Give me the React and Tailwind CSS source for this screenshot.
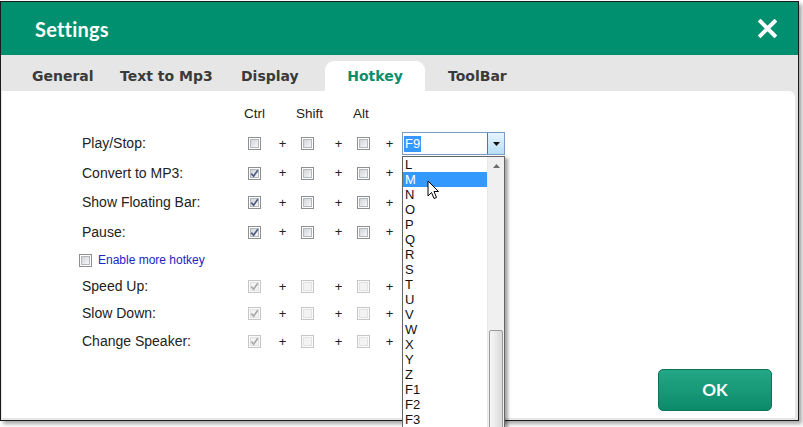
import React from "react";

const Check = ({ checked, disabled }) => (
  <div
    className={
      disabled
        ? "relative w-[13px] h-[13px] shrink-0 border border-[#c6c6c6] bg-[#fafafa] p-[1px]"
        : "relative w-[13px] h-[13px] shrink-0 border border-[#8e8f8f] bg-white p-[1px]"
    }
  >
    <div
      className={
        disabled
          ? "w-full h-full border border-[#e2e2e2] bg-[#f3f3f3]"
          : "w-full h-full border border-[#b4b8bd] bg-gradient-to-br from-[#d2d4d8] to-[#f7f7f7]"
      }
    />
    {checked && (
      <svg className="absolute left-0 top-0" width="11" height="11" viewBox="0 0 11 11">
        <path
          d="M2.3 5.6 L4.6 8.2 L8.8 2.2"
          fill="none"
          stroke={disabled ? "#a9a9a9" : "#4b5c82"}
          strokeWidth="1.7"
        />
      </svg>
    )}
  </div>
);

const Plus = ({ ml, mr }) => (
  <div className={`flex justify-center w-[7px] text-[13px] text-[#222] ${ml} ${mr}`}>+</div>
);

const Row = ({ label, c, h, disabled, children }) => (
  <div className={`flex items-center pl-[80px] ${h}`}>
    <div className="w-[166px] text-[14px] text-[#222]">{label}</div>
    <Check checked={c} disabled={disabled} />
    <Plus ml="ml-[18px]" mr="mr-[15px]" />
    <Check disabled={disabled} />
    <Plus ml="ml-[21px]" mr="mr-[15px]" />
    <Check disabled={disabled} />
    <Plus ml="ml-[16px]" mr="mr-[9px]" />
    {children}
  </div>
);

const items = ["L", "M", "N", "O", "P", "Q", "R", "S", "T", "U", "V", "W", "X", "Y", "Z", "F1", "F2", "F3"];

const Select = () => (
  <div className="relative w-[103px] h-[23px]">
    <div className="flex w-full h-full border border-[#7a9cc4] bg-white">
      <div className="flex-1 flex items-center pl-[1px]">
        <span className="bg-[#3399ff] text-white text-[13px] leading-[16px] px-[1px]">F9</span>
      </div>
      <div className="w-[17px] h-full border-l border-[#3c7fb1] bg-gradient-to-b from-[#e6f4fc] to-[#b7def4] flex items-center justify-center">
        <svg width="7" height="4" viewBox="0 0 7 4">
          <path d="M0 0 H7 L3.5 4 Z" fill="#111" />
        </svg>
      </div>
    </div>
    <div className="absolute left-0 top-[24px] w-[103px] h-[300px] border border-[#646464] bg-white shadow-[3px_2px_3px_rgba(0,0,0,0.35)] flex z-10">
      <div className="flex-1 flex flex-col">
        {items.map((it) => (
          <div
            key={it}
            className={
              it === "M"
                ? "h-[15px] leading-[15px] text-[13px] pl-[2px] bg-[#3399ff] text-white"
                : "h-[15px] leading-[15px] text-[13px] pl-[2px] text-[#111]"
            }
          >
            {it}
          </div>
        ))}
      </div>
      <div className="w-[17px] h-full bg-[#f0f0f0] border-l border-[#e8e8e8] flex flex-col">
        <div className="h-[17px] flex items-center justify-center">
          <svg width="7" height="4" viewBox="0 0 7 4">
            <path d="M0 4 H7 L3.5 0 Z" fill="#6d6d6d" />
          </svg>
        </div>
        <div className="h-[156px]" />
        <div className="flex-1 mx-[1px] rounded-[2px] border border-[#9b9b9b] bg-gradient-to-r from-[#f6f6f6] via-[#e9e9e9] to-[#d9d9d9]" />
      </div>
      <svg className="absolute left-[24px] top-[23px]" width="14" height="21" viewBox="0 0 14 21">
        <path
          d="M1 1 L1 16 L4.5 12.5 L7 18.5 L9.5 17.5 L7 11.5 L11.5 11.5 Z"
          fill="#fff"
          stroke="#000"
          strokeWidth="1"
          strokeLinejoin="round"
        />
      </svg>
    </div>
  </div>
);

export default function App() {
  return (
    <div className="w-[803px] h-[427px] overflow-hidden bg-white relative font-['Liberation_Sans',Arial,sans-serif]">
      <div className="mt-[1px] w-[799px] h-[420px] border border-[#1b1b1b] bg-[#e6e6e6] shadow-[3px_3px_4px_rgba(0,0,0,0.35)] flex flex-col">
        {/* Header */}
        <div className="h-[53px] bg-[#00906f] flex items-center justify-between pl-[34px] pr-[21px]">
          <div className="text-white text-[20px] font-bold font-['Lato',sans-serif] tracking-[0.2px]">Settings</div>
          <svg width="19" height="19" viewBox="0 0 19 19">
            <path d="M2.5 2.5 L16.5 16.5 M16.5 2.5 L2.5 16.5" stroke="#fff" strokeWidth="4" strokeLinecap="square" />
          </svg>
        </div>
        {/* Tabs */}
        <div className="h-[36px] flex items-end pl-[31px] font-['DejaVu_Sans',sans-serif] font-bold text-[14px] text-[#3a3a3a]">
          <div className="w-[88px] h-[30px] flex items-center">General</div>
          <div className="w-[121px] h-[30px] flex items-center">Text to Mp3</div>
          <div className="w-[84px] h-[30px] flex items-center">Display</div>
          <div className="w-[100px] h-[30px] flex items-center justify-center bg-white rounded-t-[9px] text-[#0c8d6c]">Hotkey</div>
          <div className="ml-[23px] h-[30px] flex items-center">ToolBar</div>
        </div>
        {/* Panel */}
        <div className="flex-1 ml-[1px] mr-[3px] mb-[2px] bg-white rounded-tr-[6px] flex flex-col pt-[8.25px]">
          <div className="flex items-center h-[29.5px] pl-[242px] text-[13.5px] text-[#222]">
            <span>Ctrl</span>
            <span className="ml-[31px]">Shift</span>
            <span className="ml-[30px]">Alt</span>
          </div>
          <Row label="Play/Stop:" h="h-[29.5px]">
            <Select />
          </Row>
          <Row label="Convert to MP3:" c h="h-[29.5px]" />
          <Row label="Show Floating Bar:" c h="h-[29.5px]" />
          <Row label="Pause:" c h="h-[29.5px]" />
          <div className="flex items-center h-[27px] pl-[77px]">
            <Check />
            <span className="ml-[6px] text-[12px] text-[#2323c4]">Enable more hotkey</span>
          </div>
          <Row label="Speed Up:" c disabled h="h-[25px]" />
          <Row label="Slow Down:" c disabled h="h-[29px]" />
          <Row label="Change Speaker:" c disabled h="h-[28px]" />
          <div className="flex-1" />
          <div className="flex justify-end pr-[23px] pb-[7px]">
            <div className="w-[114px] h-[42px] rounded-[5px] border border-[#0b7558] bg-gradient-to-b from-[#23a786] to-[#0a8b69] flex items-center justify-center text-white font-bold text-[17px] font-['Lato',sans-serif]">
              OK
            </div>
          </div>
        </div>
      </div>
    </div>
  );
}
